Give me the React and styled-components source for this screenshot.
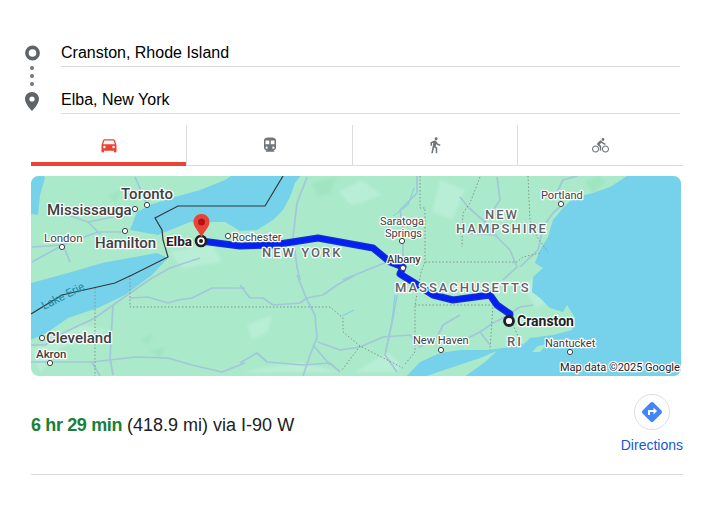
import React from "react";
import styled, { createGlobalStyle } from "styled-components";
import {
  MdDirections,
  MdDirectionsBike,
  MdDirectionsCar,
  MdDirectionsTransit,
  MdDirectionsWalk
} from "react-icons/md";

const GlobalStyle = createGlobalStyle`
  html, body {
    margin: 0;
    padding: 0;
    background: #fff;
    font-family: "Liberation Sans", Arial, sans-serif;
  }
`;

const Page = styled.div`
  width: 652px;
  padding: 20px 0 0 31px;
`;

const Endpoints = styled.div`
  display: flex;
  margin: 0 3px 0 -6px;
`;

const Rail = styled.div`
  flex: 0 0 36px;
  padding-top: 25px;
  svg {
    display: block;
  }
`;

const Fields = styled.div`
  flex: 1;
`;

const Field = styled.div`
  height: 47px;
  box-sizing: border-box;
  display: flex;
  align-items: flex-end;
  padding-bottom: 2px;
  border-bottom: 1px solid #dadce0;
  font-size: 16px;
  line-height: 22px;
  color: #000;
`;

const Tabs = styled.div`
  display: grid;
  grid-template-columns: 155px 166px 165px 166px;
  margin-top: 11px;
`;

const Tab = styled.div`
  height: 41px;
  box-sizing: border-box;
  display: flex;
  align-items: center;
  justify-content: center;
  color: ${p => (p.$active ? "#ea4335" : "#70757a")};
  border-bottom: ${p => (p.$active ? "4px solid #ea4335" : "1px solid #dadce0")};
  border-left: ${p => (p.$first ? "0" : "1px solid #dadce0")};
  padding-top: ${p => (p.$active ? "3px" : "0")};
`;

const MapFrame = styled.div`
  width: 650px;
  height: 200px;
  margin-top: 10px;
  border-radius: 8px;
  overflow: hidden;
  svg {
    display: block;
  }
`;

const MapLabel = styled.text`
  font-family: Roboto, "Liberation Sans", sans-serif;
  font-size: ${p => p.$size || 11}px;
  font-weight: ${p => p.$weight || 400};
  letter-spacing: ${p => p.$spacing || 0}px;
  fill: ${p => p.$color || "#3c4043"};
  stroke: #fff;
  stroke-width: 2.5px;
  stroke-linejoin: round;
  paint-order: stroke;
`;

const WaterLabel = styled.text`
  font-family: Roboto, "Liberation Sans", sans-serif;
  font-size: 11.5px;
  fill: #1f8aa8;
`;

const Result = styled.div`
  display: flex;
  align-items: center;
  justify-content: space-between;
  margin-top: 18px;
  padding-bottom: 21px;
  border-bottom: 1px solid #dadce0;
`;

const Summary = styled.div`
  padding-top: 2px;
  font-size: 18px;
  line-height: 22px;
  color: #202124;
`;

const Duration = styled.span`
  font-weight: 700;
  letter-spacing: -0.36px;
  color: #188038;
`;

const DirectionsLink = styled.a`
  display: flex;
  flex-direction: column;
  align-items: center;
  gap: 7px;
  font-size: 14px;
  line-height: 16px;
  color: #1558d6;
`;

const DirectionsIcon = styled.span`
  width: 36px;
  height: 36px;
  box-sizing: border-box;
  display: flex;
  align-items: center;
  justify-content: center;
  border: 1px solid #dadce0;
  border-radius: 50%;
  color: #4285f4;
`;

const ROADS = [
  "M135 177L142 193L147 205",
  "M88 222L108 218L132 212",
  "M60 212L88 222L100 234",
  "M32 247L63 245L98 232L125 232",
  "M63 245L32 262",
  "M63 245L70 262",
  "M113 305L152 278L170 268L200 258",
  "M130 298L148 297L168 303L178 300L192 298L212 288L245 288",
  "M113 305L110 358L113 375",
  "M31 362L92 362L135 357L168 358L192 365L222 372L245 363",
  "M92 362L100 376",
  "M31 345L45 345L65 332L95 318L113 305",
  "M240 285L250 298L263 298L273 305L300 303L307 298L323 295L337 285L355 275",
  "M297 275L305 295L307 300L315 315L317 338L310 355L303 376",
  "M318 342L340 350L360 347L383 337L410 335L420 347",
  "M240 363L257 353L267 362L303 365L330 363L340 372",
  "M397 295L393 318L385 355L397 372",
  "M313 345L330 365",
  "M460 315L443 325L437 337L420 347",
  "M307 177L297 203L293 237L297 267L300 280",
  "M343 280L367 270L387 262",
  "M417 176L417 193L400 210L403 230L403 267",
  "M497 177L500 200L485 222",
  "M460 197L468 207L485 222L497 237L510 250L517 267L503 280",
  "M577 176L563 180L558 190L562 205L553 213L543 227L538 250L520 267",
  "M460 233L497 235",
  "M460 342L480 332L493 323L503 318L520 307L533 305",
  "M480 332L490 345"
];

const STATE_LINES = [
  "M95 288V376",
  "M130 275V307H330L343 318V332L360 346L403 368",
  "M360 346L342 370",
  "M420 176V208H425V262L421 272L415 305V352L405 364",
  "M415 305H493L490 350",
  "M425 262H517L523 257L540 253",
  "M528 176L530 220L537 237L548 252",
  "M480 177L470 203L463 213L462 247",
  "M510 318L522 345"
];

const CITY_DOTS = [
  [135, 209], [147, 205], [125, 231], [62, 247], [228, 236], [402, 241],
  [403, 268], [561, 204], [42, 338], [50, 363], [441, 350], [570, 352]
];

const LABELS = [
  { x: 121, y: 199, text: "Toronto", size: 15, weight: 500 },
  { x: 47, y: 215, text: "Mississauga", size: 15, weight: 500 },
  { x: 95, y: 248, text: "Hamilton", size: 15, weight: 500 },
  { x: 44, y: 242, text: "London", size: 11.5 },
  { x: 166, y: 246, text: "Elba", size: 13.5, weight: 700, color: "#202124" },
  { x: 232, y: 241, text: "Rochester", size: 11 },
  { x: 262, y: 257, text: "NEW YORK", size: 13, weight: 500, spacing: 2, color: "#5f6368" },
  { x: 380, y: 225, text: "Saratoga", size: 11 },
  { x: 385, y: 237, text: "Springs", size: 11 },
  { x: 387, y: 263, text: "Albany", size: 11, weight: 500 },
  { x: 395, y: 292, text: "MASSACHUSETTS", size: 13, weight: 500, spacing: 2, color: "#5f6368" },
  { x: 485, y: 219, text: "NEW", size: 13, weight: 500, spacing: 2, color: "#5f6368" },
  { x: 456, y: 233, text: "HAMPSHIRE", size: 13, weight: 500, spacing: 2, color: "#5f6368" },
  { x: 541, y: 199, text: "Portland", size: 11 },
  { x: 46, y: 343, text: "Cleveland", size: 15, weight: 500 },
  { x: 36, y: 358, text: "Akron", size: 11.5, weight: 500 },
  { x: 413, y: 344, text: "New Haven", size: 11 },
  { x: 517, y: 326, text: "Cranston", size: 14, weight: 700, color: "#202124" },
  { x: 507, y: 346, text: "RI", size: 13, weight: 500, spacing: 2, color: "#5f6368" },
  { x: 545, y: 347, text: "Nantucket", size: 11 },
  { x: 560, y: 371, text: "Map data ©2025 Google", size: 11, color: "#202124" }
];

const ROUTE =
  "M201 241L240 246L273 245L318 238L373 248L390 262L403 267L400 274L413 282L433 295L453 300L490 295L497 305L510 314L509 321";

const RouteGlyph = () => (
  <svg width="15" height="66" viewBox="25 45 15 66">
    <circle cx="32.500" cy="53" r="5.600" fill="none" stroke="#5f6368" strokeWidth="3.600" />
    <circle cx="32" cy="68" r="2" fill="#70757a" />
    <circle cx="32" cy="76" r="2" fill="#70757a" />
    <circle cx="32" cy="84" r="2" fill="#70757a" />
    <path
      fillRule="evenodd"
      fill="#5f6368"
      d="M32 92c-3.900 0-7 3.100-7 7 0 5.200 7 12 7 12s7-6.800 7-12c0-3.900-3.100-7-7-7zm0 9.600a2.600 2.600 0 1 1 0-5.200 2.600 2.600 0 0 1 0 5.200z"
    />
  </svg>
);

const RouteMap = () => (
  <svg width="650" height="200" viewBox="31 176 650 200">
    <defs>
      <filter id="soft" x="-10%" y="-10%" width="120%" height="120%">
        <feGaussianBlur stdDeviation="1.600" />
      </filter>
      <filter id="shore" x="-5%" y="-5%" width="110%" height="110%">
        <feGaussianBlur stdDeviation="0.500" />
      </filter>
    </defs>
    <rect x="31" y="176" width="650" height="200" fill="#aae9ca" />

    <g fill="#b8eed6" filter="url(#soft)">
      <path d="M440 180L465 190L452 220L432 212Z" />
      <path d="M31 350L80 325L110 330L60 348L40 372Z" />
      <path d="M240 372L300 362L340 372Z" />
      <path d="M247 325L272 315L268 332L252 340Z" />
      <path d="M170 252L212 244L222 262L182 268Z" />
      <path d="M355 372L388 352L402 366L396 372Z" />
      <path d="M338 192L362 180L382 195L352 206Z" />
      <path d="M522 285L545 272L558 298L536 308Z" />
    </g>
    <g fill="#9fe5c1" filter="url(#soft)">
      <path d="M312 182L336 178L330 194L318 196Z" />
      <path d="M140 340L152 334L150 345Z" />
      <path d="M150 350L165 347L160 358Z" />
      <path d="M107 195L122 190L116 203Z" />
      <path d="M585 181L600 176L606 182L592 194Z" />
    </g>

    <g fill="#76d2ea" filter="url(#shore)">
      <path d="M25 170H40L45 178L40 195L38 215L25 213Z" />
      <path d="M130 230L137 212L150 205L175 197L200 190L225 180L240 170H305L295 183L290 197L283 210L273 220L257 230L240 231L225 222L190 222L158 235Z" />
      <path d="M157 253L102 263L68 273L42 280L25 285V342L35 338L48 332L68 318L98 308L125 295L152 275L168 258Z" />
      <path d="M627 170L627 176L610 187L593 193L573 198L563 208L553 220L548 237L540 250L535 263L543 268L533 277L532 292L540 298L550 308L563 312L567 305L575 318L572 330L553 335L530 338L523 345L503 348L488 350L460 350L440 353L420 362L403 380H690V170Z" />
    </g>
    <g fill="#aae9ca" filter="url(#shore)">
      <path d="M415 380L450 368L480 358L497 351L485 362L460 380Z" />
      <path d="M532 352L538 346L547 344L540 352Z" />
      <path d="M566 352L574 350L572 355Z" />
    </g>
    <g fill="none" stroke="#76d2ea" strokeWidth="1">
      <path d="M395 295L392 320L388 340" />
      <path d="M414 188L408 205L393 216" />
      <path d="M342 316L354 310" />
    </g>

    <g fill="none" stroke="#a3c7da" strokeWidth="1.700" strokeLinejoin="round">
      {ROADS.map(d => (
        <path key={d} d={d} />
      ))}
    </g>
    <g fill="none" stroke="#83958f" strokeWidth="1" strokeDasharray="1.500 2">
      {STATE_LINES.map(d => (
        <path key={d} d={d} />
      ))}
    </g>
    <path
      d="M283 176L265 206H178L155 218L162 230L163 240L168 257L132 275L115 283L62 295L31 314"
      fill="none"
      stroke="#35393b"
      strokeWidth="1.200"
    />

    <path d={ROUTE} fill="none" stroke="#1433c4" strokeWidth="7" strokeLinejoin="round" />
    <path d={ROUTE} fill="none" stroke="#0420f6" strokeWidth="4.500" strokeLinejoin="round" />

    <WaterLabel transform="translate(44 310) rotate(-27)">Lake Erie</WaterLabel>

    {LABELS.map(l => (
      <MapLabel
        key={l.text}
        x={l.x}
        y={l.y}
        $size={l.size}
        $weight={l.weight}
        $spacing={l.spacing}
        $color={l.color}
      >
        {l.text}
      </MapLabel>
    ))}

    {CITY_DOTS.map(([cx, cy]) => (
      <circle key={`${cx}-${cy}`} cx={cx} cy={cy} r="2.600" fill="#fff" stroke="#3c4043" strokeWidth="1" />
    ))}

    <circle cx="201" cy="241" r="5" fill="#fff" stroke="#202124" strokeWidth="2.600" />
    <circle cx="201" cy="241" r="2" fill="#202124" />
    <path
      d="M201.500 214c-4.500 0-8 3.500-8 8 0 5.600 6 9.500 8 16 2-6.500 8-10.400 8-16 0-4.500-3.500-8-8-8z"
      fill="#ea4335"
    />
    <circle cx="201.500" cy="222" r="3.500" fill="#b31412" />

    <circle cx="509" cy="321" r="4.500" fill="#fff" stroke="#202124" strokeWidth="2.800" />
  </svg>
);

export default function App() {
  return (
    <Page>
      <GlobalStyle />
      <Endpoints>
        <Rail>
          <RouteGlyph />
        </Rail>
        <Fields>
          <Field>Cranston, Rhode Island</Field>
          <Field>Elba, New York</Field>
        </Fields>
      </Endpoints>

      <Tabs>
        <Tab $active $first>
          <MdDirectionsCar size={20} />
        </Tab>
        <Tab>
          <MdDirectionsTransit size={18} />
        </Tab>
        <Tab>
          <MdDirectionsWalk size={18} />
        </Tab>
        <Tab>
          <MdDirectionsBike size={17} />
        </Tab>
      </Tabs>

      <MapFrame>
        <RouteMap />
      </MapFrame>

      <Result>
        <Summary>
          <Duration>6 hr 29 min</Duration> (418.9 mi) via I-90 W
        </Summary>
        <DirectionsLink>
          <DirectionsIcon>
            <MdDirections size={24} />
          </DirectionsIcon>
          Directions
        </DirectionsLink>
      </Result>
    </Page>
  );
}
